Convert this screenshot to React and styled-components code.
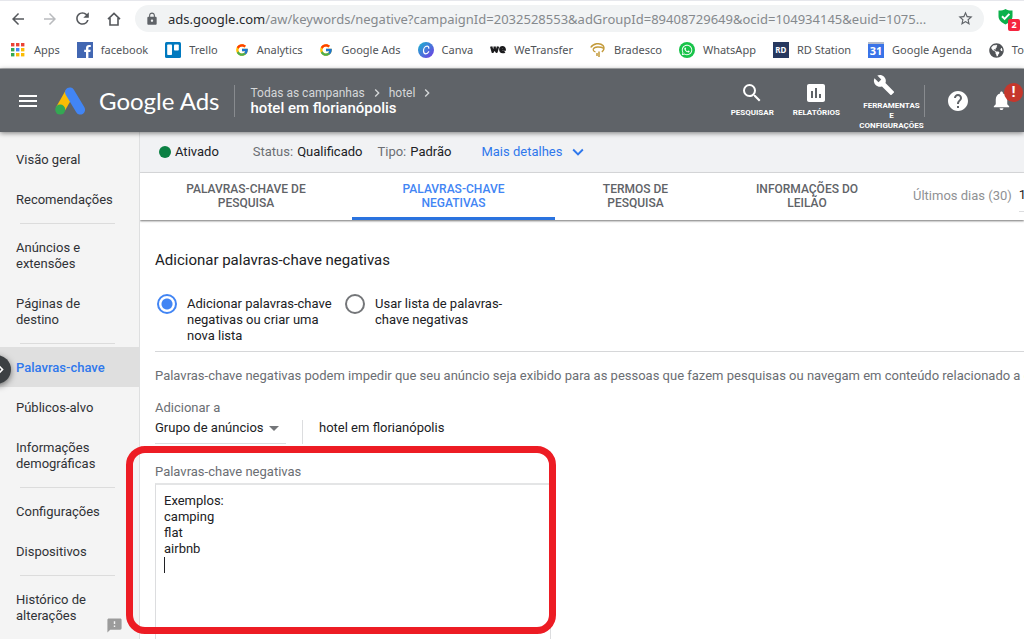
import React, { useState } from "react";
import styled, { createGlobalStyle } from "styled-components";
import {
  MdArrowBack,
  MdArrowForward,
  MdRefresh,
  MdLock,
  MdStarBorder,
  MdSearch,
  MdAssessment,
  MdBuild,
  MdHelp,
  MdNotifications,
  MdChevronRight,
  MdExpandMore,
  MdFeedback,
  MdArrowDropDown,
} from "react-icons/md";
import { FcGoogle } from "react-icons/fc";
import { FaWhatsapp, FaGlobeAmericas } from "react-icons/fa";

const GlobalStyle = createGlobalStyle`
  * {
    box-sizing: border-box;
  }

  body {
    margin: 0;
    overflow: hidden;
    background-color: #fff;
    color: #202124;
    font-family: Roboto, "Liberation Sans", sans-serif;
    font-size: 13px;
    line-height: 16px;
  }

  button, select, textarea, input {
    font: inherit;
    color: inherit;
  }

  button {
    padding: 0;
    border: none;
    background: none;
    cursor: pointer;
  }

  a {
    color: inherit;
    text-decoration: none;
  }

  svg {
    display: block;
    flex-shrink: 0;
  }

  h1, p {
    margin: 0;
    font-weight: 400;
  }
`;

const Page = styled.div`
  display: flex;
  flex-direction: column;
  height: 100vh;
  overflow: hidden;
`;

/* browser bar */

const Browser = styled.div`
  flex-shrink: 0;
  border-top: 1px solid #e6e7ec;
  border-bottom: 1px solid #b4b6b8;
  font-family: "Noto Sans", "Open Sans", sans-serif;
  background-color: #fff;
`;

const Toolbar = styled.div`
  display: flex;
  align-items: center;
  height: 35px;
  padding: 0 5px 0 9px;
`;

const ToolButton = styled.button`
  display: flex;
  justify-content: center;
  width: 18px;
  margin-right: 14px;
  color: ${(props) => (props.$muted ? "#b9bbbe" : "#55585c")};
`;

const Address = styled.div`
  display: flex;
  align-items: center;
  flex: 1;
  min-width: 0;
  height: 27px;
  margin-left: -2px;
  padding: 0 10px;
  border-radius: 14px;
  background-color: #f1f3f4;
  color: #5f6368;
`;

const AddressText = styled.div`
  flex: 1;
  min-width: 0;
  margin: 0 16px 0 9px;
  overflow: hidden;
  white-space: nowrap;
  text-overflow: ellipsis;
  font-size: 13px;
  line-height: 20px;
  color: #85898d;

  span {
    color: #27292c;
  }
`;

const Extension = styled.div`
  position: relative;
  width: 22px;
  height: 22px;
  margin-left: 13px;

  span {
    position: absolute;
    right: -1px;
    bottom: -1px;
    width: 12px;
    height: 12px;
    border-radius: 2px;
    background-color: #f5253f;
    color: #fff;
    font-size: 9px;
    font-weight: 700;
    line-height: 12px;
    text-align: center;
  }
`;

const Bookmarks = styled.div`
  display: flex;
  align-items: center;
  gap: 17px;
  height: 32px;
  padding: 0 0 4px 10px;
`;

const Bookmark = styled.a`
  display: flex;
  align-items: center;
  flex-shrink: 0;
  gap: 8px;
  font-size: 11px;
  color: #505357;
  white-space: nowrap;
`;

/* app header */

const Header = styled.header`
  position: relative;
  z-index: 2;
  display: flex;
  align-items: center;
  flex-shrink: 0;
  height: 63px;
  padding: 0 11px 0 19px;
  background-color: #5f6368;
  color: #fff;
  box-shadow: 0 1px 5px rgba(0, 0, 0, 0.5);
`;

const Brand = styled.a`
  display: flex;
  align-items: center;
  gap: 13px;
  margin-left: 18px;
  padding-right: 14px;
  font-family: Lato, sans-serif;
  font-size: 24px;
  line-height: 32px;
  border-right: 1px solid #888b8f;
  white-space: nowrap;
`;

const Crumbs = styled.nav`
  margin-left: 16px;
  white-space: nowrap;

  div {
    display: flex;
    align-items: center;
    font-size: 12px;
    line-height: 15px;
    color: #d5d7d9;
  }

  svg {
    margin: 0 4px;
  }

  strong {
    display: block;
    font-size: 15px;
    font-weight: 500;
    line-height: 15px;
  }
`;

const HeaderTools = styled.div`
  display: flex;
  align-items: center;
  margin-left: auto;
`;

const HeaderTool = styled.button`
  display: flex;
  flex-direction: column;
  align-items: center;
  gap: 3px;
  margin-right: 19px;
  padding-bottom: 3px;
  font-size: 8px;
  font-weight: 700;
  line-height: 10px;
  text-transform: uppercase;
  color: #fff;
`;

const ToolsButton = styled(HeaderTool)`
  width: 65px;
  gap: 5px;
  margin-right: 0;
  padding: 3px 0 0;

  svg {
    margin-right: 16px;
  }
`;

const Rule = styled.div`
  width: 1px;
  height: 32px;
  background-color: #888b8f;
`;

const IconButton = styled.button`
  position: relative;
  margin-left: ${(props) => props.$left}px;
  color: #fff;
`;

const Alert = styled.span`
  position: absolute;
  top: -6px;
  right: -10px;
  width: 19px;
  height: 19px;
  border-radius: 50%;
  background-color: #c5372c;
  font-size: 15px;
  font-weight: 700;
  line-height: 19px;
  text-align: center;
`;

/* body */

const Body = styled.div`
  position: relative;
  display: flex;
  flex: 1;
  min-height: 0;
`;

const Sidebar = styled.nav`
  position: relative;
  flex: 0 0 140px;
  padding-top: 7px;
  background-color: #f4f4f4;
  border-right: 1px solid #dedfe0;
`;

const SideLink = styled.a`
  display: block;
  padding: 13px 20px 11px 16px;
  font-size: 13px;
  color: ${(props) => (props.$active ? "#2f78ec" : "#303236")};
  font-weight: ${(props) => (props.$active ? 500 : 400)};
  background-color: ${(props) => (props.$active ? "#dfdfdf" : "transparent")};
`;

const SideRule = styled.div`
  height: 1px;
  margin: 4px 24px 3px 20px;
  background-color: #dcdcdc;
`;

const Expand = styled.button`
  position: absolute;
  top: 223px;
  left: -18px;
  display: flex;
  align-items: center;
  justify-content: flex-end;
  width: 29px;
  height: 29px;
  padding-right: 1px;
  border-radius: 50%;
  background-color: #3c4043;
  color: #fff;
  box-shadow: 0 2px 6px rgba(0, 0, 0, 0.5);
`;

const Feedback = styled.button`
  position: absolute;
  right: 16px;
  bottom: 5px;
  color: #9b9b9b;
`;

const Main = styled.main`
  flex: 1;
  min-width: 0;
`;

const StatusBar = styled.div`
  display: flex;
  align-items: center;
  height: 41px;
  padding-left: 19px;
  background-color: #f1f2f4;
  border-bottom: 1px solid #dcdddf;
  white-space: nowrap;

  span {
    color: #6b6e73;
  }
`;

const StatusItem = styled.div`
  display: flex;
  align-items: center;
  gap: 4px;
  margin-right: ${(props) => props.$right}px;
`;

const Dot = styled.i`
  width: 12px;
  height: 12px;
  border-radius: 50%;
  background-color: #0b8043;
`;

const Details = styled.button`
  display: flex;
  align-items: center;
  gap: 5px;
  color: #2f78ec;
`;

const Tabs = styled.div`
  display: flex;
  height: 47px;
  background-color: #fff;
  box-shadow: 0 1px 2px rgba(0, 0, 0, 0.55);
`;

const Tab = styled.button`
  flex: 0 0 ${(props) => props.$width}px;
  padding: 2px 36px 0;
  border-bottom: 3px solid ${(props) => (props.$active ? "#2a73df" : "transparent")};
  font-size: 12px;
  font-weight: 500;
  line-height: 14px;
  color: ${(props) => (props.$active ? "#4285f4" : "#5f6368")};
`;

const DateRange = styled.button`
  display: flex;
  align-items: center;
  gap: 7px;
  flex-shrink: 0;
  margin-left: 15px;
  padding-bottom: 2px;
  color: #8f9194;
  white-space: nowrap;

  b {
    padding: 8px 0;
    border-bottom: 1px solid #dcdddf;
    font-weight: 400;
    color: #202124;
  }
`;

const Form = styled.form`
  padding: 30px 0 0 15px;
`;

const Title = styled.h1`
  font-size: 15px;
  line-height: 20px;
`;

const Options = styled.div`
  display: flex;
  gap: 9px;
  margin-top: 26px;
  padding-bottom: 7px;
  border-bottom: 1px solid #d6d7d9;
`;

const Option = styled.label`
  display: flex;
  align-items: flex-start;
  gap: 10px;
  width: 179px;
`;

const Radio = styled.input`
  appearance: none;
  flex-shrink: 0;
  width: 20px;
  height: 20px;
  margin: -2px 0 0 2px;
  border: 2px solid #747679;
  border-radius: 50%;

  &:checked {
    border-color: #4285f4;
    background: radial-gradient(circle, #4285f4 5px, #fff 6px);
  }
`;

const Intro = styled.p`
  margin: 16px 0;
  overflow: hidden;
  white-space: nowrap;
  color: #6b6e73;
`;

const FieldLabel = styled.label`
  display: block;
  color: #6b6e73;
`;

const Target = styled.div`
  display: flex;
  align-items: flex-start;
  height: 28px;
`;

const SelectBox = styled.div`
  display: flex;
  align-items: center;
  position: relative;
  width: 131px;
  height: 28px;
  border-bottom: 1px solid #dcdddf;

  select {
    appearance: none;
    flex: 1;
    height: 24px;
    margin-bottom: 4px;
    padding: 0;
    border: none;
    background: none;
  }

  svg {
    position: absolute;
    right: 0;
    top: 0;
    color: #747679;
    pointer-events: none;
  }
`;

const TargetName = styled.div`
  height: 24px;
  margin: 4px 0 0 16px;
  padding-left: 16px;
  border-left: 1px solid #dcdddf;
`;

const Keywords = styled.div`
  position: relative;
  width: 396px;
  margin-top: 20px;
`;

const KeywordBox = styled.textarea`
  display: block;
  width: 100%;
  height: 180px;
  margin-top: 3px;
  padding: 8px;
  border: 1px solid #dcdddf;
  border-top: 2px solid #e4e5e6;
  outline: none;
  resize: none;
`;

const Caret = styled.i`
  position: absolute;
  top: 93px;
  left: 9px;
  width: 1px;
  height: 16px;
  background-color: #202124;
`;

const Highlight = styled.div`
  position: absolute;
  top: -18px;
  left: -29px;
  right: -5px;
  height: 188px;
  border: 7px solid #ed1c24;
  border-radius: 19px;
  pointer-events: none;
`;

const HomeIcon = () => (
  <svg width="14" height="14" viewBox="0 0 14 14" fill="none" stroke="currentColor" strokeWidth="1.6">
    <path d="M1 7.2 7 1.4l6 5.8M3 6v7h8V6" />
  </svg>
);

const AppsIcon = () => (
  <svg width="16" height="16" viewBox="0 0 16 16">
    {["#ea4335", "#ea4335", "#ea4335", "#34a853", "#4285f4", "#fbbc05", "#34a853", "#fbbc05", "#fbbc05"].map(
      (fill, i) => (
        <rect key={i} x={1 + (i % 3) * 5} y={1 + Math.floor(i / 3) * 5} width="3.4" height="3.4" fill={fill} />
      )
    )}
  </svg>
);

const FacebookIcon = () => (
  <svg width="16" height="16" viewBox="0 0 16 16">
    <path fill="#4267b2" d="M0 0h16v16H0z" />
    <path fill="#fff" d="M9 16v-6H7.2V7.7H9V6c0-2 1.2-3.1 3-3.1h1.8V5h-1.2c-.9 0-1.2.5-1.2 1.2v1.5h2.3l-.4 2.3h-1.9v6z" />
  </svg>
);

const TrelloIcon = () => (
  <svg width="16" height="16" viewBox="0 0 16 16">
    <rect width="16" height="16" rx="1.5" fill="#0079bf" />
    <rect x="2.2" y="2.5" width="4.8" height="10.5" rx=".8" fill="#fff" />
    <rect x="9" y="2.5" width="4.8" height="6" rx=".8" fill="#fff" />
  </svg>
);

const CanvaIcon = () => (
  <svg width="16" height="16" viewBox="0 0 16 16">
    <defs>
      <linearGradient id="canva" x1="0" y1="0" x2="1" y2="1">
        <stop offset="0" stopColor="#17b6cf" />
        <stop offset="1" stopColor="#7438e4" />
      </linearGradient>
    </defs>
    <circle cx="8" cy="8" r="8" fill="url(#canva)" />
    <path d="M10.8 6.2c0-1.3-.7-2-1.700-2C7 4.200 5.500 6.500 5.500 8.800c0 1.900.9 3 2.300 3 1.200 0 2.200-.8 2.900-2.100" fill="none" stroke="#fff" strokeWidth="1.2" strokeLinecap="round" />
  </svg>
);

const WeTransferIcon = () => (
  <svg width="16" height="16" viewBox="0 0 16 16" fill="none" stroke="#1b1b1d">
    <path d="M1.2 4.5 2.7 9.8 4.7 6.5 6.5 9.8 8 4.500M4.700 4.500v3" strokeWidth="2.4" strokeLinejoin="round" />
    <path d="M10.5 7.600h4.300c0-1.700-1-2.500-2.300-2.500s-2.300 1-2.300 2.500 1 2.600 2.500 2.600c.9 0 1.500-.2 2-.6" strokeWidth="2.2" />
  </svg>
);

const BradescoIcon = () => (
  <svg width="16" height="16" viewBox="0 0 16 16" fill="none" stroke="#c39a3a">
    <path d="M.8 5.500C3 1.500 10 .3 13 3.500c2 2.600.7 5-1.200 6.300" strokeWidth="1.5" />
    <path d="M13.800 6.400C10 4.300 4.300 4.600 3.300 7c-.5 1.500.8 2.500 2.200 2.800" strokeWidth="1.3" />
    <path d="M7 11v3M9 9.500V15" strokeWidth="1.5" />
  </svg>
);

const WhatsIcon = styled.span`
  display: flex;
  align-items: center;
  justify-content: center;
  width: 16px;
  height: 16px;
  border-radius: 50%;
  background-color: #18c349;
  color: #fff;
`;

const RdIcon = styled(WhatsIcon)`
  border-radius: 0;
  background-color: #26385f;
  font-size: 8px;
  font-weight: 700;
`;

const CalendarIcon = styled(RdIcon)`
  border-top: 2px solid #b4bccb;
  background-color: #3973e8;
  font-size: 11px;
  line-height: 12px;
`;

const ShieldIcon = () => (
  <svg width="18" height="18" viewBox="0 0 18 18">
    <path fill="#0cb14b" d="M8.500 1C6.500 2.300 4 2.600 1.500 2.500v5.800c0 4 3.500 6.500 7 8.200 3.500-1.700 7-4.200 7-8.200V2.500C13 2.600 10.500 2.300 8.500 1z" />
    <path d="m5 8.300 2.600 2.600 4.800-5" fill="none" stroke="#fff" strokeWidth="2" />
  </svg>
);

const MenuIcon = () => (
  <svg width="18" height="12" viewBox="0 0 18 12" fill="currentColor">
    <path d="M0 0h18v2H0zM0 5h18v2H0zM0 10h18v2H0z" />
  </svg>
);

const AdsLogo = () => (
  <svg width="31" height="28" viewBox="0 0 31 28">
    <path d="M14.800 5.500 5.500 22" stroke="#fbbc04" strokeWidth="9.500" />
    <path d="m14.800 5.200 10.500 17.600" stroke="#4285f4" strokeWidth="9.500" strokeLinecap="round" />
    <circle cx="5.200" cy="22.600" r="5" fill="#34a853" />
  </svg>
);

const bookmarks = [
  { name: "Apps", icon: <AppsIcon /> },
  { name: "facebook", icon: <FacebookIcon /> },
  { name: "Trello", icon: <TrelloIcon /> },
  { name: "Analytics", icon: <FcGoogle size={14} /> },
  { name: "Google Ads", icon: <FcGoogle size={14} /> },
  { name: "Canva", icon: <CanvaIcon /> },
  { name: "WeTransfer", icon: <WeTransferIcon /> },
  { name: "Bradesco", icon: <BradescoIcon /> },
  { name: "WhatsApp", icon: <WhatsIcon><FaWhatsapp size={12} /></WhatsIcon> },
  { name: "RD Station", icon: <RdIcon>RD</RdIcon> },
  { name: "Google Agenda", icon: <CalendarIcon>31</CalendarIcon> },
  { name: "Todos", icon: <FaGlobeAmericas size={15} /> },
];

const sideGroups = [
  ["Visão geral", "Recomendações"],
  ["Anúncios e extensões", "Páginas de destino"],
  ["Palavras-chave", "Públicos-alvo", "Informações demográficas"],
  ["Configurações", "Dispositivos"],
  ["Histórico de alterações"],
];

const tabs = [
  { name: "PALAVRAS-CHAVE DE PESQUISA", width: 212 },
  { name: "PALAVRAS-CHAVE NEGATIVAS", width: 203 },
  { name: "TERMOS DE PESQUISA", width: 161 },
  { name: "INFORMAÇÕES DO LEILÃO", width: 182 },
];

const BrowserBar = () => (
  <Browser>
    <Toolbar>
      <ToolButton aria-label="Voltar"><MdArrowBack size={18} /></ToolButton>
      <ToolButton aria-label="Avançar" $muted><MdArrowForward size={18} /></ToolButton>
      <ToolButton aria-label="Recarregar"><MdRefresh size={19} /></ToolButton>
      <ToolButton aria-label="Início"><HomeIcon /></ToolButton>
      <Address>
        <MdLock size={14} />
        <AddressText>
          <span>ads.google.com</span>
          /aw/keywords/negative?campaignId=2032528553&amp;adGroupId=89408729649&amp;ocid=104934145&amp;euid=1075...
        </AddressText>
        <MdStarBorder size={17} />
      </Address>
      <Extension>
        <ShieldIcon />
        <span>2</span>
      </Extension>
    </Toolbar>
    <Bookmarks>
      {bookmarks.map((item) => (
        <Bookmark key={item.name} href="#">
          {item.icon}
          {item.name}
        </Bookmark>
      ))}
    </Bookmarks>
  </Browser>
);

const AppHeader = () => (
  <Header>
    <IconButton aria-label="Menu" $left={0}><MenuIcon /></IconButton>
    <Brand href="#">
      <AdsLogo />
      Google Ads
    </Brand>
    <Crumbs>
      <div>
        <a href="#">Todas as campanhas</a>
        <MdChevronRight size={16} />
        <a href="#">hotel</a>
        <MdChevronRight size={16} />
      </div>
      <strong>hotel em florianópolis</strong>
    </Crumbs>
    <HeaderTools>
      <HeaderTool>
        <MdSearch size={24} />
        Pesquisar
      </HeaderTool>
      <HeaderTool>
        <MdAssessment size={24} />
        Relatórios
      </HeaderTool>
      <ToolsButton>
        <MdBuild size={22} />
        <span>
          Ferramentas<br />e<br />configurações
        </span>
      </ToolsButton>
      <Rule />
      <IconButton aria-label="Ajuda" $left={21}><MdHelp size={24} /></IconButton>
      <IconButton aria-label="Notificações" $left={20}>
        <MdNotifications size={23} />
        <Alert>!</Alert>
      </IconButton>
    </HeaderTools>
  </Header>
);

const SideMenu = () => (
  <Sidebar>
    {sideGroups.map((group, i) => (
      <React.Fragment key={i}>
        {i > 0 && <SideRule />}
        {group.map((name) => (
          <SideLink key={name} href="#" $active={name === "Palavras-chave"}>
            {name}
          </SideLink>
        ))}
      </React.Fragment>
    ))}
    <Expand aria-label="Expandir"><MdChevronRight size={19} /></Expand>
    <Feedback aria-label="Feedback"><MdFeedback size={17} /></Feedback>
  </Sidebar>
);

export default function App() {
  const [mode, setMode] = useState("new");
  const [keywords, setKeywords] = useState("Exemplos:\ncamping\nflat\nairbnb\n");

  return (
    <Page>
      <GlobalStyle />
      <BrowserBar />
      <AppHeader />
      <Body>
        <SideMenu />
        <Main>
          <StatusBar>
            <StatusItem $right={34}><Dot />Ativado</StatusItem>
            <StatusItem $right={15}><span>Status:</span>Qualificado</StatusItem>
            <StatusItem $right={30}><span>Tipo:</span>Padrão</StatusItem>
            <Details>
              Mais detalhes
              <MdExpandMore size={22} />
            </Details>
          </StatusBar>
          <Tabs>
            {tabs.map((tab, i) => (
              <Tab key={tab.name} $width={tab.width} $active={i === 1}>
                {tab.name}
              </Tab>
            ))}
            <DateRange>
              Últimos dias (30)
              <b>1 de jan.</b>
            </DateRange>
          </Tabs>
          <Form>
            <Title>Adicionar palavras-chave negativas</Title>
            <Options>
              <Option>
                <Radio type="radio" name="mode" checked={mode === "new"} onChange={() => setMode("new")} />
                Adicionar palavras-chave negativas ou criar uma nova lista
              </Option>
              <Option>
                <Radio type="radio" name="mode" checked={mode === "list"} onChange={() => setMode("list")} />
                Usar lista de palavras-chave negativas
              </Option>
            </Options>
            <Intro>
              Palavras-chave negativas podem impedir que seu anúncio seja exibido para as pessoas que fazem pesquisas ou navegam em conteúdo relacionado a esses termos.
            </Intro>
            <FieldLabel htmlFor="level">Adicionar a</FieldLabel>
            <Target>
              <SelectBox>
                <select id="level">
                  <option>Grupo de anúncios</option>
                  <option>Campanha</option>
                </select>
                <MdArrowDropDown size={24} />
              </SelectBox>
              <TargetName>hotel em florianópolis</TargetName>
            </Target>
            <Keywords>
              <FieldLabel htmlFor="keywords">Palavras-chave negativas</FieldLabel>
              <KeywordBox id="keywords" value={keywords} onChange={(e) => setKeywords(e.target.value)} />
              <Caret />
              <Highlight />
            </Keywords>
          </Form>
        </Main>
      </Body>
    </Page>
  );
}
